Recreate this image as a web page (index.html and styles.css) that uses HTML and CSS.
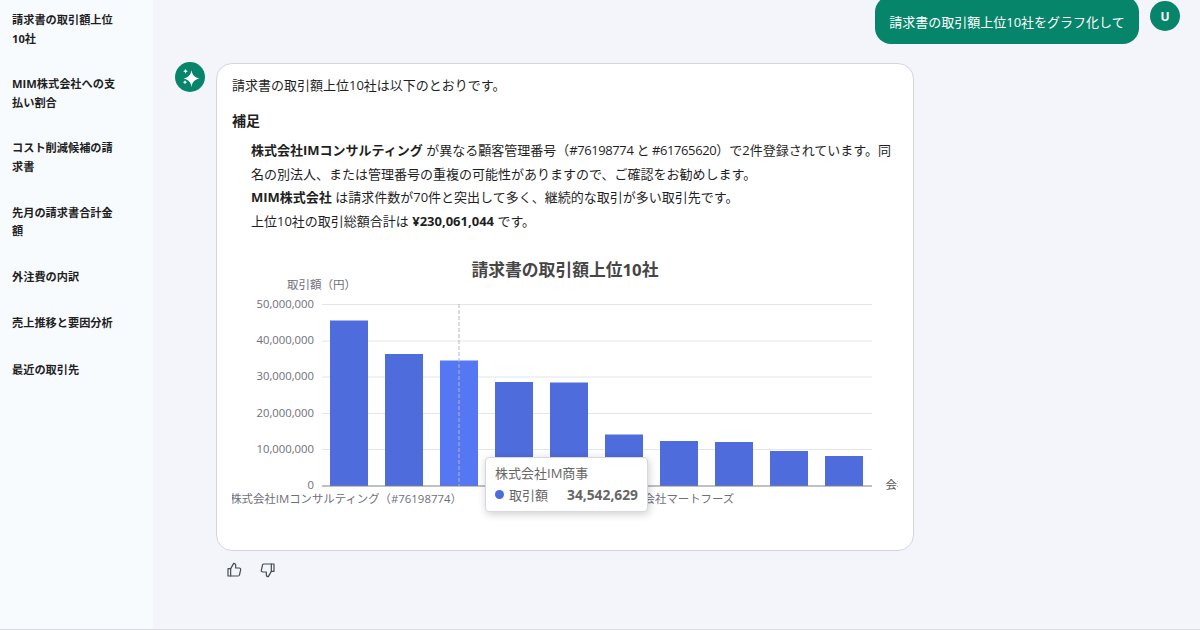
FILE: index.html
```html
<!DOCTYPE html>
<html lang="ja">
<head>
    <meta charset="UTF-8">
    <title>請求書の取引額上位10社</title>
    <link rel="stylesheet" href="styles.css">
</head>
<body>
    <div class="app">
        <aside class="sidebar">
            <a class="history-item">請求書の取引額上位10社</a>
            <a class="history-item">MIM株式会社への支払い割合</a>
            <a class="history-item">コスト削減候補の請求書</a>
            <a class="history-item">先月の請求書合計金額</a>
            <a class="history-item">外注費の内訳</a>
            <a class="history-item">売上推移と要因分析</a>
            <a class="history-item">最近の取引先</a>
        </aside>
        <main class="chat">
            <div class="user-row">
                <div class="user-bubble">請求書の取引額上位10社をグラフ化して</div>
                <div class="avatar user-avatar">U</div>
            </div>
            <div class="bot-row">
                <div class="avatar bot-avatar">
                    <svg width="30" height="30" viewBox="0 0 30 30" fill="#fff">
                        <path d="M16.500 8C17.300 13 19 15 24.500 16.500C19 18 17.300 20 16.500 25C15.700 20 14 18 8.500 16.500C14 15 15.700 13 16.500 8Z"/>
                        <path d="M10.500 6.500C10.800 8.300 11.300 8.800 13 9.200C11.300 9.600 10.800 10.100 10.500 11.900C10.200 10.100 9.700 9.600 8 9.200C9.700 8.800 10.200 8.300 10.500 6.500Z"/>
                        <path d="M10 17.800C10.300 19.400 10.700 19.800 12.300 20.200C10.700 20.600 10.300 21 10 22.600C9.700 21 9.300 20.600 7.700 20.200C9.300 19.800 9.700 19.400 10 17.800Z"/>
                    </svg>
                </div>
                <div class="bot-column">
                    <div class="card">
                        <p class="lead">請求書の取引額上位10社は以下のとおりです。</p>
                        <h3 class="note-title">補足</h3>
                        <div class="note-list">
                            <p><b>株式会社IMコンサルティング</b> が異なる顧客管理番号（<span class="ref-no">#76198774 と #61765620</span>）で2件登録されています。同名の別法人、または管理番号の重複の可能性がありますので、ご確認をお勧めします。</p>
                            <p><b>MIM株式会社</b> は請求件数が70件と突出して多く、継続的な取引が多い取引先です。</p>
                            <p>上位10社の取引総額合計は <b>¥230,061,044</b> です。</p>
                        </div>
                        <div class="chart">
                            <svg class="chart-svg" width="666" height="270" viewBox="232 250 666 270">
                                <text class="chart-title" x="565" y="276">請求書の取引額上位10社</text>
                                <text class="axis-name" x="321.500" y="289">取引額（円）</text>

                                <g class="grid">
                                    <line x1="322" x2="872" y1="304.500" y2="304.500"/>
                                    <line x1="322" x2="872" y1="341" y2="341"/>
                                    <line x1="322" x2="872" y1="377" y2="377"/>
                                    <line x1="322" x2="872" y1="413.500" y2="413.500"/>
                                    <line x1="322" x2="872" y1="449.500" y2="449.500"/>
                                </g>

                                <g class="y-labels">
                                    <text x="314" y="307.500">50,000,000</text>
                                    <text x="314" y="343.500">40,000,000</text>
                                    <text x="314" y="379.500">30,000,000</text>
                                    <text x="314" y="416.500">20,000,000</text>
                                    <text x="314" y="452.500">10,000,000</text>
                                    <text x="314" y="489">0</text>
                                </g>

                                <g class="bars">
                                    <rect x="330" y="320.500" width="38" height="165.500"/>
                                    <rect x="385" y="354" width="38" height="132"/>
                                    <rect class="bar-active" x="440" y="360.500" width="38" height="125.500"/>
                                    <rect x="495" y="382" width="38" height="104"/>
                                    <rect x="550" y="382.500" width="38" height="103.500"/>
                                    <rect x="605" y="434.500" width="38" height="51.500"/>
                                    <rect x="660" y="441" width="38" height="45"/>
                                    <rect x="715" y="442" width="38" height="44"/>
                                    <rect x="770" y="451" width="38" height="35"/>
                                    <rect x="825" y="456" width="38" height="30"/>
                                </g>

                                <line class="axis-line" x1="322" x2="872" y1="486" y2="486"/>
                                <line class="pointer-line" x1="459" x2="459" y1="304" y2="486"/>

                                <g class="x-labels">
                                    <text x="346" y="503">株式会社IMコンサルティング（#76198774）</text>
                                    <text x="677.500" y="503">株式会社マートフーズ</text>
                                    <text class="x-label-cut" x="885.500" y="489">会社</text>
                                </g>
                            </svg>
                            <div class="tooltip">
                                <div class="tooltip-name">株式会社IM商事</div>
                                <div class="tooltip-row">
                                    <span class="tooltip-dot"></span>
                                    <span class="tooltip-label">取引額</span>
                                    <span class="tooltip-value">34,542,629</span>
                                </div>
                            </div>
                        </div>
                    </div>
                    <div class="feedback">
                        <svg width="16" height="16" viewBox="0 0 24 24" fill="none" stroke="#454c54" stroke-width="1.800" stroke-linejoin="round" stroke-linecap="round">
                            <path d="M7 10v11H3V10z"/>
                            <path d="M7 10l4.500-8c1.700 0 3 1.300 3 3v4h5.500c1.300 0 2.300 1.200 2 2.500l-1.800 8c-.2 1-1.100 1.500-2 1.500H7"/>
                        </svg>
                        <svg width="16" height="16" viewBox="0 0 24 24" fill="none" stroke="#454c54" stroke-width="1.800" stroke-linejoin="round" stroke-linecap="round">
                            <path d="M17 14V3h4v11z"/>
                            <path d="M17 14l-4.500 8c-1.700 0-3-1.300-3-3v-4H4c-1.300 0-2.300-1.200-2-2.500l1.800-8c.2-1 1.100-1.500 2-1.500H17"/>
                        </svg>
                    </div>
                </div>
            </div>
        </main>
    </div>
</body>
</html>
```
FILE: styles.css
```css
* {
    box-sizing: border-box;
}
html, body {
    height: 100%;
}
body {
    margin: 0;
    background-color: #f3f5fa;
    color: #1f1f1f;
    font-family: "Open Sans", "Noto Sans CJK JP", sans-serif;
    font-size: 13px;
    overflow: hidden;
}
.app {
    display: flex;
    height: 630px;
    border-bottom: 1px solid #dcdde3;
}
.sidebar {
    width: 153px;
    flex-shrink: 0;
    padding: 11px 36px 0 12px;
    background-color: #f8fbfe;
    display: flex;
    flex-direction: column;
    gap: 27.200px;
}
.history-item {
    font-size: 11.200px;
    font-weight: 700;
    line-height: 18.500px;
    color: #1f1f1f;
    min-height: 19.500px;
}
.chat {
    flex: 1;
    padding: 0 20px 0 22px;
}
.user-row {
    display: flex;
    justify-content: flex-end;
    align-items: flex-start;
    gap: 11px;
}
.user-bubble {
    width: 264px;
    height: 48px;
    margin-top: -4px;
    background-color: #07856b;
    color: #fff;
    line-height: 52px;
    text-align: center;
    border-radius: 16px;
}
.avatar {
    width: 30px;
    height: 30px;
    border-radius: 50%;
    background-color: #07856b;
    color: #fff;
    display: flex;
    justify-content: center;
    align-items: center;
    flex-shrink: 0;
}
.user-avatar {
    font-size: 12px;
    font-weight: 700;
    margin-top: 1px;
}
.bot-row {
    display: flex;
    align-items: flex-start;
    gap: 11px;
    margin-top: 19px;
}
.bot-avatar {
    margin-top: -1px;
}
.bot-column {
    width: 698px;
}
.card {
    height: 488px;
    background-color: #fff;
    border: 1px solid #d4d6dc;
    border-radius: 16px;
    padding: 10px 15px 0;
}
.lead {
    margin: 0;
    line-height: 22px;
}
.note-title {
    margin: 14px 0 0;
    font-size: 14px;
    font-weight: 700;
    line-height: 22px;
}
.note-list {
    margin-top: 7px;
    padding-left: 19px;
    line-height: 23.600px;
}
.note-list p {
    margin: 0;
}
.ref-no {
    letter-spacing: -0.400px;
}
.chart {
    position: relative;
    margin-top: 16.600px;
}
.chart-svg {
    display: block;
    font-family: "Open Sans", "Noto Sans CJK JP", sans-serif;
}
.chart-title {
    font-size: 16.800px;
    font-weight: 700;
    fill: #464646;
    text-anchor: middle;
}
.axis-name {
    font-size: 11.500px;
    fill: #6e7079;
    text-anchor: middle;
}
.grid line {
    stroke: #e3e5ea;
    stroke-width: 1;
}
.y-labels text {
    font-size: 11.300px;
    fill: #6e7079;
    text-anchor: end;
}
.bars rect {
    fill: #4f6cdc;
}
.bars .bar-active {
    fill: #5577f3;
}
.axis-line {
    stroke: #7f8186;
    stroke-width: 1;
}
.pointer-line {
    stroke: #b5b7bd;
    stroke-width: 1;
    stroke-dasharray: 4 2;
}
.x-labels text {
    font-size: 11.400px;
    fill: #6e7079;
    text-anchor: middle;
}
.x-labels .x-label-cut {
    fill: #555;
    text-anchor: start;
}
.tooltip {
    position: absolute;
    left: 253px;
    top: 207px;
    width: 163px;
    height: 55px;
    background-color: #fff;
    border: 1px solid #d8d9dd;
    border-radius: 4px;
    box-shadow: 1px 2px 8px rgba(0, 0, 0, 0.2);
    padding: 6px 9px;
    color: #666;
}
.tooltip-name {
    font-size: 13px;
    line-height: 18px;
}
.tooltip-row {
    display: flex;
    align-items: center;
    margin-top: 3px;
    line-height: 20px;
}
.tooltip-dot {
    width: 9px;
    height: 9px;
    border-radius: 50%;
    background-color: #4a6cdc;
    margin-right: 5px;
}
.tooltip-label {
    font-size: 13px;
}
.tooltip-value {
    margin-left: auto;
    font-weight: 700;
    font-size: 13.800px;
}
.feedback {
    display: flex;
    gap: 18px;
    padding: 11px 0 0 10px;
}
```
